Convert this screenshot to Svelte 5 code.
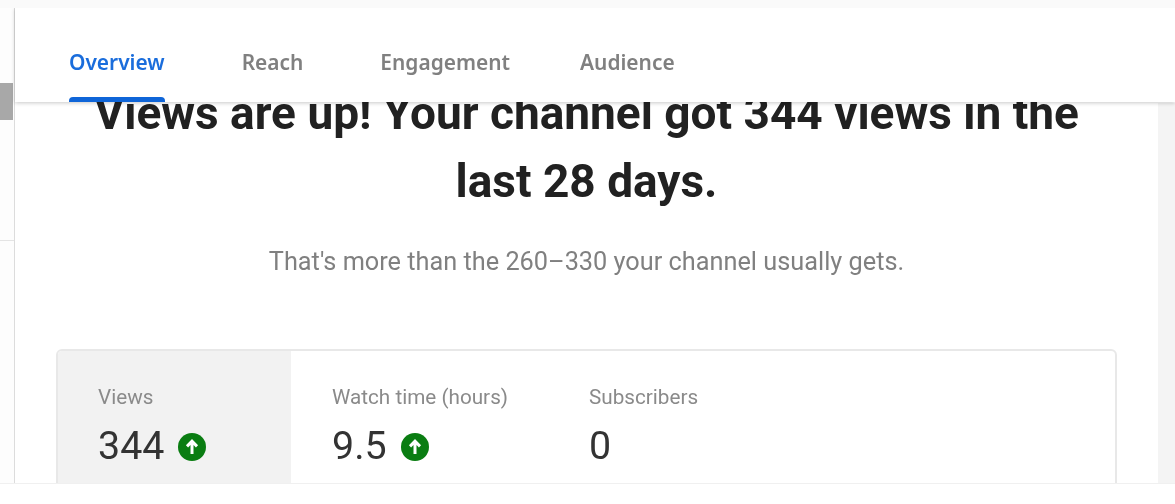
<script>
  const tabs = ['Overview', 'Reach', 'Engagement', 'Audience'];
  const metrics = [
    { label: 'Views', value: '344', up: true, active: true },
    { label: 'Watch time (hours)', value: '9.5', up: true },
    { label: 'Subscribers', value: '0', up: false }
  ];
</script>

<div class="shot">
  <div class="topstrip"></div>
  <div class="frame">
    <aside class="side">
      <div class="thumb"></div>
      <div class="rule"></div>
    </aside>
    <main class="main">
      <nav class="tabs">
        {#each tabs as tab, i}
          <div class="tab" class:on={i === 0}>{tab}</div>
        {/each}
      </nav>
      <div class="content">
        <div class="body">
          <h1>Views are up! Your channel got 344 views in the last 28 days.</h1>
          <p>That's more than the 260–330 your channel usually gets.</p>
          <section class="card">
            {#each metrics as m}
              <div class="metric" class:active={m.active}>
                <div class="label">{m.label}</div>
                <div class="value">
                  <span>{m.value}</span>
                  {#if m.up}
                    <svg class="up" viewBox="0 0 28 28" width="28" height="28" aria-hidden="true">
                      <circle cx="14" cy="14" r="14" fill="#0a7d12" />
                      <path d="M14 21V8.5M9 13.4 14 8.2l5 5.2" fill="none" stroke="#fff" stroke-width="3" />
                    </svg>
                  {/if}
                </div>
              </div>
            {/each}
          </section>
        </div>
        <div class="gutter"></div>
      </div>
    </main>
  </div>
</div>

<style>
  :global(body) {
    margin: 0;
    background: #fff;
  }
  .shot {
    width: 1175px;
    height: 504px;
    overflow: hidden;
    font-family: Roboto, "Liberation Sans", sans-serif;
    background: #fff;
    filter: blur(0.4px);
  }
  .topstrip {
    height: 8px;
    background: #fafafa;
  }
  .frame {
    height: 475px;
    display: flex;
    overflow: hidden;
    border-bottom: 1px solid #f0f0f0;
  }
  .side {
    width: 14px;
    flex: none;
    box-sizing: content-box;
    border-right: 1px solid #dcdcdc;
    background: #fdfdfd;
  }
  .thumb {
    height: 37px;
    width: 13px;
    margin-top: 75px;
    background: #a8a8a8;
  }
  .rule {
    height: 1px;
    margin-top: 120px;
    background: #e4e4e4;
  }
  .main {
    flex: 1;
    min-width: 0;
    position: relative;
    background: #fff;
  }
  .tabs {
    position: absolute;
    inset: 0 0 auto 0;
    height: 94px;
    z-index: 2;
    background: #fff;
    display: flex;
    gap: 77px;
    padding-left: 54px;
    box-shadow: 0 1px 4px rgba(0, 0, 0, 0.22);
    font-family: "Noto Sans", Roboto, sans-serif;
    font-size: 20.9px;
    font-weight: 600;
    color: #808080;
  }
  .tab {
    position: relative;
    height: 94px;
    line-height: 108px;
  }
  .tab:last-child {
    margin-left: -7px;
  }
  .tab.on {
    color: #1a6ddc;
  }
  .tab.on::after {
    content: '';
    position: absolute;
    left: 0;
    right: 0;
    bottom: 0;
    height: 5px;
    border-radius: 4px 4px 0 0;
    background: #0f65d8;
  }
  .content {
    display: flex;
    height: 100%;
  }
  .body {
    flex: 1;
    min-width: 0;
    padding: 0 41px;
    text-align: center;
  }
  .gutter {
    width: 17px;
    flex: none;
    background: #f4f4f4;
    margin-top: 95px;
  }
  h1 {
    margin: 71px 0 0;
    padding: 0 20px;
    font-size: 46px;
    line-height: 68px;
    font-weight: 700;
    color: #212121;
  }
  p {
    margin: 31px 0 0;
    font-size: 25.3px;
    line-height: 32px;
    color: #808080;
  }
  .card {
    margin-top: 71px;
    height: 200px;
    display: flex;
    text-align: left;
    border: 2px solid #e8e8e8;
    border-radius: 6px;
    overflow: hidden;
  }
  .metric {
    padding: 35px 40px 0 41px;
  }
  .metric.active {
    width: 233px;
    padding-left: 40px;
    box-sizing: border-box;
    background: #f2f2f2;
  }
  .label {
    font-size: 20.7px;
    line-height: 22px;
    color: #8a8a8a;
  }
  .value {
    display: flex;
    align-items: center;
    gap: 14px;
    margin-top: 15px;
    font-size: 39.4px;
    line-height: 46px;
    color: #333;
  }
  .up {
    margin-top: 2px;
  }
</style>
